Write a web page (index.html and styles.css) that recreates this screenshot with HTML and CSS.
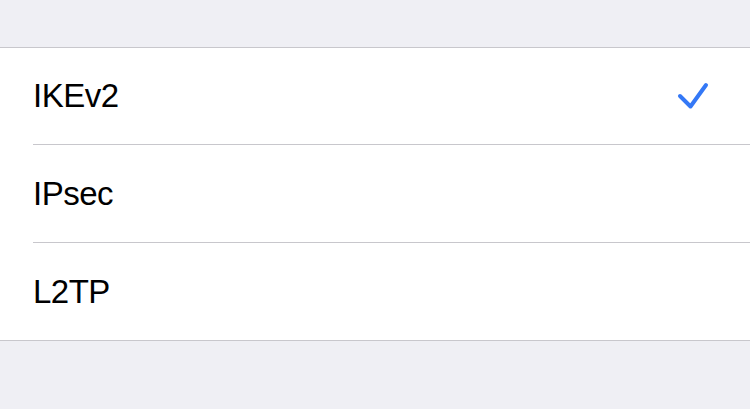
FILE: index.html
```html
<!DOCTYPE html>
<html lang="en">
    <head>
        <meta charset="UTF-8">
        <meta name="viewport" content="width=device-width, initial-scale=1.0">
        <title>VPN Type</title>
        <link rel="stylesheet" href="styles.css">
    </head>
    <body>
        <div class="spacer"></div>
        <ul class="options">
            <li class="option">
                <span class="label">IKEv2</span>
                <svg class="check" width="32" height="28" viewBox="0 0 32 28">
                    <path d="M3 14 L13.5 24.5 L29 3" fill="none" stroke="#3478f6" stroke-width="4" stroke-linecap="round" stroke-linejoin="round"/>
                </svg>
            </li>
            <li class="option">
                <span class="label">IPsec</span>
            </li>
            <li class="option">
                <span class="label">L2TP</span>
            </li>
        </ul>
    </body>
</html>
```

FILE: styles.css
```css
body {
    margin: 0;
    padding: 0;
    background-color: #efeff4;
    font-family: "Liberation Sans", Arial, sans-serif;
}

.spacer {
    height: 47px;
}

.options {
    list-style-type: none;
    margin: 0;
    padding: 0 0 0 33px;
    background-color: #ffffff;
    border-top: 1px solid #c8c7cc;
    border-bottom: 1px solid #c8c7cc;
}

.option {
    display: flex;
    align-items: center;
    justify-content: space-between;
    height: 97px;
    padding-right: 41px;
    border-bottom: 1px solid #c8c7cc;
}

.option:first-child {
    height: 96px;
}

.option:last-child {
    border-bottom: none;
}

.label {
    font-size: 33px;
    letter-spacing: -0.5px;
    color: #000000;
}

.check {
    display: block;
}
```
